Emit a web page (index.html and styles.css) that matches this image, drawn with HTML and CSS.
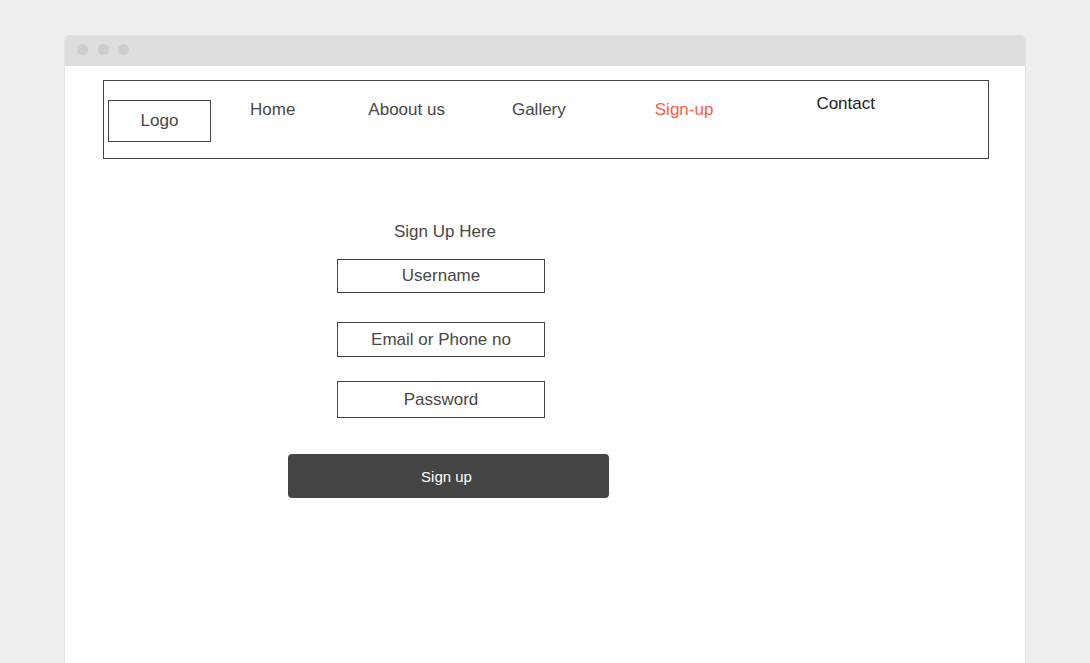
FILE: index.html
```html
<!DOCTYPE html>
<html>
<head>
<meta charset="utf-8">
<title>Sign Up</title>
<link rel="stylesheet" href="styles.css">
</head>
<body>
<div class="window">
  <div class="titlebar">
    <span class="dot"></span><span class="dot"></span><span class="dot"></span>
  </div>
  <div class="content">
    <nav class="nav">
      <div class="logo">Logo</div>
      <a class="nav-item home">Home</a>
      <a class="nav-item about">Aboout us</a>
      <a class="nav-item gallery">Gallery</a>
      <a class="nav-item signup active">Sign-up</a>
      <a class="nav-item contact">Contact</a>
    </nav>
    <form class="form">
      <div class="form-title">Sign Up Here</div>
      <div class="field f-user">Username</div>
      <div class="field f-email">Email or Phone no</div>
      <div class="field f-pass">Password</div>
      <div class="btn">Sign up</div>
    </form>
  </div>
</div>
</body>
</html>
```

FILE: styles.css
```css
* { box-sizing: border-box; }
html, body {
  margin: 0;
  height: 100%;
  background: #eeeeee;
  font-family: "Liberation Sans", Arial, sans-serif;
  color: #474747;
}
body {
  padding: 35px 0 0 64px;
  overflow: hidden;
}
.window {
  width: 962px;
  min-height: 640px;
  background: #ffffff;
  border: 1px solid #e3e3e3;
  border-top: none;
  border-radius: 5px 5px 0 0;
  overflow: hidden;
}
.titlebar {
  height: 31px;
  background: #dddddd;
  display: flex;
  align-items: flex-start;
  padding: 9px 0 0 12px;
  gap: 9.5px;
}
.dot {
  width: 11px;
  height: 11px;
  border-radius: 50%;
  background: #cdcdcd;
}
.content {
  padding: 14px 0 0 38px;
}
.nav {
  width: 886px;
  height: 79px;
  border: 1px solid #444444;
  display: flex;
  align-items: flex-start;
  padding-left: 4px;
}
.logo {
  width: 103px;
  height: 42px;
  margin-top: 19px;
  border: 1px solid #444444;
  display: flex;
  align-items: center;
  justify-content: center;
  font-size: 17px;
  line-height: 20px;
}
.nav-item {
  font-size: 17px;
  line-height: 20px;
  margin-top: 19px;
  color: #474747;
  text-decoration: none;
}
.home { margin-left: 39px; }
.about { margin-left: 73px; }
.gallery { margin-left: 67px; }
.signup { margin-left: 89px; }
.active { color: #ff5b3f; }
.contact { margin-left: 103px; margin-top: 13px; color: #222222; }

.form {
  margin: 63px 0 0 185px;
  width: 321px;
  display: flex;
  flex-direction: column;
  align-items: flex-start;
}
.form-title {
  font-size: 17px;
  line-height: 20px;
  margin-left: 106px;
}
.field {
  width: 208px;
  margin-left: 49px;
  border: 1px solid #444444;
  display: flex;
  align-items: center;
  justify-content: center;
  font-size: 17px;
}
.f-user { height: 34px; margin-top: 17px; }
.f-email { height: 35px; margin-top: 29px; }
.f-pass { height: 37px; margin-top: 24px; }
.btn {
  width: 321px;
  height: 44px;
  margin-top: 36px;
  padding-right: 4px;
  background: #444444;
  border-radius: 4px;
  color: #ffffff;
  font-size: 15px;
  display: flex;
  align-items: center;
  justify-content: center;
}
```
